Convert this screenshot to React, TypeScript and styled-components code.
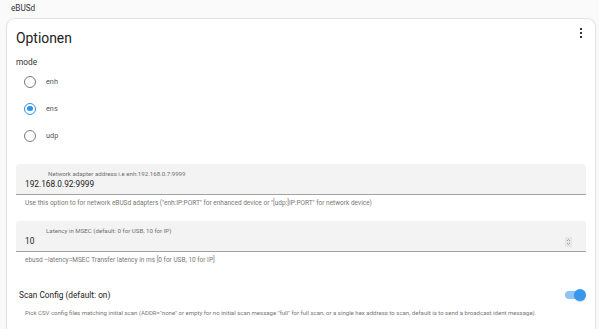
import React from "react";
import styled, { createGlobalStyle } from "styled-components";

const Global = createGlobalStyle`
  html, body { margin: 0; padding: 0; }
  body {
    background: #fafafa;
    font-family: Roboto, "Liberation Sans", sans-serif;
    color: #212121;
    overflow: hidden;
  }
`;

const Page = styled.div`
  width: 599px;
  height: 329px;
  display: flex;
  flex-direction: column;
`;

const TopBar = styled.div`
  height: 18px;
  display: flex;
  align-items: center;
  padding-left: 11px;
  font-size: 8.2px;
  color: #333;
  box-sizing: border-box;
  padding-bottom: 2px;
`;

const Card = styled.div`
  margin: 0 3px 0 6px;
  flex: 1;
  background: #fff;
  border: 1px solid #e4e4e4;
  border-bottom: none;
  border-radius: 9px 9px 0 0;
  box-shadow: 0 0 2px rgba(0, 0, 0, 0.06);
  padding: 0 9px;
  display: flex;
  flex-direction: column;
`;

const TitleRow = styled.div`
  display: flex;
  justify-content: space-between;
  align-items: flex-start;
  margin-top: 10px;
`;

const Title = styled.h1`
  margin: 0;
  font-size: 13.9px;
  font-weight: 400;
  line-height: 19px;
  color: #212121;
`;

const MenuButton = styled.div`
  margin-top: -1px;
  margin-right: 4px;
  display: flex;
  flex-direction: column;
  gap: 1.5px;
`;

const Dot = styled.span`
  width: 2.4px;
  height: 2.4px;
  background: #333;
  display: block;
`;

const GroupLabel = styled.div`
  margin-top: 8px;
  font-size: 8.3px;
  line-height: 12px;
  color: #333;
`;

const RadioRow = styled.label`
  height: 27px;
  display: flex;
  align-items: center;
  padding-left: 8px;
  gap: 10px;
  font-size: 7.3px;
  color: #555;
`;

const RadioCircle = styled.span<{ $checked?: boolean }>`
  width: 12px;
  height: 12px;
  box-sizing: border-box;
  border-radius: 50%;
  border: 1.3px solid ${(p) => (p.$checked ? "#2f93ee" : "#7a7a7a")};
  display: flex;
  align-items: center;
  justify-content: center;
  &::after {
    content: "";
    width: 5.6px;
    height: 5.6px;
    border-radius: 50%;
    background: ${(p) => (p.$checked ? "#2f93ee" : "transparent")};
  }
`;

const Field = styled.div<{ $top: number }>`
  margin-top: ${(p) => p.$top}px;
  height: 31px;
  box-sizing: border-box;
  background: #f3f3f3;
  border-bottom: 1px solid #a2a2a2;
  border-radius: 3px 3px 0 0;
  display: flex;
  flex-direction: column;
`;

const FieldLabel = styled.div<{ $indent: number }>`
  padding-left: ${(p) => p.$indent}px;
  margin-top: 7px;
  font-size: 6.15px;
  line-height: 7px;
  color: #707070;
  white-space: nowrap;
`;

const FieldValueRow = styled.div`
  display: flex;
  align-items: center;
  justify-content: space-between;
  padding: 0 14px 0 9px;
  height: 12px;
`;

const FieldValue = styled.div`
  font-size: 8.3px;
  color: #212121;
`;

const Spinner = styled.div`
  width: 7px;
  height: 10px;
  background: #e6e6e6;
  display: flex;
  align-items: center;
  justify-content: center;
  margin-top: 1px;
`;

const Helper = styled.div<{ $top: number; $size: number }>`
  margin-top: ${(p) => p.$top}px;
  padding-left: 9px;
  font-size: ${(p) => p.$size}px;
  line-height: 8px;
  color: #777;
  white-space: nowrap;
`;

const SwitchRow = styled.div`
  margin-top: 24px;
  display: flex;
  align-items: center;
  justify-content: space-between;
  padding-left: 3px;
  height: 14px;
`;

const SwitchLabel = styled.div`
  font-size: 8.3px;
  color: #212121;
`;

const Switch = styled.div`
  width: 21px;
  height: 14px;
  position: relative;
  display: flex;
  align-items: center;
`;

const Track = styled.span`
  width: 18px;
  height: 8px;
  border-radius: 4px;
  background: #8ec5f4;
`;

const Thumb = styled.span`
  position: absolute;
  right: 0;
  top: 1px;
  width: 12px;
  height: 12px;
  border-radius: 50%;
  background: #3797ee;
  box-shadow: 0 1px 1px rgba(0, 0, 0, 0.2);
`;

const options = [
  { value: "enh", checked: false },
  { value: "ens", checked: true },
  { value: "udp", checked: false },
];

export default function App() {
  return (
    <Page>
      <Global />
      <TopBar>eBUSd</TopBar>
      <Card>
        <TitleRow>
          <Title>Optionen</Title>
          <MenuButton>
            <Dot />
            <Dot />
            <Dot />
          </MenuButton>
        </TitleRow>
        <GroupLabel>mode</GroupLabel>
        {options.map((o) => (
          <RadioRow key={o.value}>
            <RadioCircle $checked={o.checked} />
            {o.value}
          </RadioRow>
        ))}
        <Field $top={15}>
          <FieldLabel $indent={32}>Network adapter address i.e enh:192.168.0.7:9999</FieldLabel>
          <FieldValueRow>
            <FieldValue>192.168.0.92:9999</FieldValue>
          </FieldValueRow>
        </Field>
        <Helper $top={4} $size={6.5}>
          Use this option to for network eBUSd adapters ("enh:IP:PORT" for enhanced device or "[udp:]IP:PORT" for network device)
        </Helper>
        <Field $top={14}>
          <FieldLabel $indent={30}>Latency in MSEC (default: 0 for USB, 10 for IP)</FieldLabel>
          <FieldValueRow>
            <FieldValue>10</FieldValue>
            <Spinner>
              <svg width="5" height="8" viewBox="0 0 5 8">
                <path d="M1 3 L2.5 1.5 L4 3 M1 5 L2.5 6.5 L4 5" stroke="#888" strokeWidth="0.7" fill="none" />
              </svg>
            </Spinner>
          </FieldValueRow>
        </Field>
        <Helper $top={4} $size={6.5}>
          ebusd --latency=MSEC Transfer latency in ms [0 for USB, 10 for IP]
        </Helper>
        <SwitchRow>
          <SwitchLabel>Scan Config (default: on)</SwitchLabel>
          <Switch>
            <Track />
            <Thumb />
          </Switch>
        </SwitchRow>
        <Helper $top={7} $size={6.05}>
          Pick CSV config files matching initial scan (ADDR="none" or empty for no initial scan message "full" for full scan, or a single hex address to scan, default is to send a broadcast ident message).
        </Helper>
      </Card>
    </Page>
  );
}
